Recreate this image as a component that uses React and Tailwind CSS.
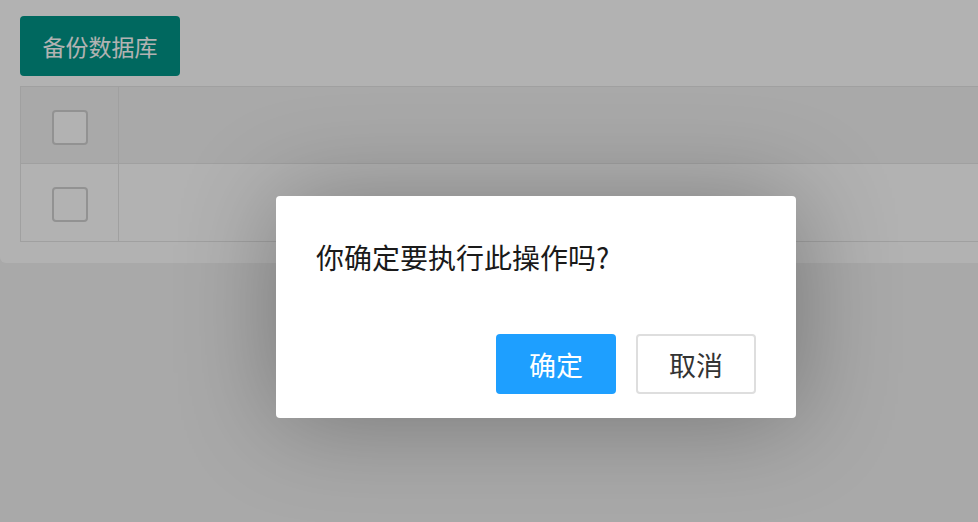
import React from "react";

export default function App() {
  const font = { fontFamily: '"Noto Sans CJK SC", "Noto Sans", sans-serif' };
  return (
    <div className="relative w-[978px] h-[522px] overflow-hidden bg-[#f2f2f2]" style={font}>
      <div className="w-[1020px] bg-white rounded-b-[6px] pt-[16px] pb-[21px] pl-[20px]">
        <div className="w-[160px] h-[60px] bg-[#009688] rounded-[4px] flex items-center justify-center text-white text-[23px] leading-none">
          备份数据库
        </div>
        <div className="mt-[10px] border border-[#e6e6e6] flex flex-col">
          <div className="flex h-[77px] bg-[#f2f2f2] border-b border-[#e6e6e6]">
            <div className="w-[98px] border-r border-[#e6e6e6] flex items-center justify-center">
              <div className="w-[36px] h-[35px] mt-[4px] border-2 border-[#d2d2d2] rounded-[4px] bg-white" />
            </div>
            <div className="flex-1" />
          </div>
          <div className="flex h-[77px] bg-white">
            <div className="w-[98px] border-r border-[#e6e6e6] flex items-center justify-center">
              <div className="w-[36px] h-[35px] mt-[4px] border-2 border-[#d2d2d2] rounded-[4px] bg-white" />
            </div>
            <div className="flex-1" />
          </div>
        </div>
      </div>

      <div className="absolute inset-0 bg-black/30" />

      <div className="absolute left-[276px] top-[196px] w-[520px] h-[222px] bg-white rounded-[4px] shadow-[2px_2px_100px_rgba(0,0,0,0.3)] flex flex-col">
        <div className="px-[40px] pt-[42px] text-[28px] leading-[38px] text-[#1a1a1a]">
          你确定要执行此操作吗?
        </div>
        <div className="flex justify-end gap-[20px] pr-[40px] pt-[58px] pb-[24px]">
          <div className="w-[120px] h-[60px] bg-[#1e9fff] rounded-[4px] flex items-center justify-center text-white text-[27px] leading-none">
            确定
          </div>
          <div className="w-[120px] h-[60px] bg-white border-2 border-[#dedede] rounded-[4px] flex items-center justify-center text-[#333] text-[27px] leading-none">
            取消
          </div>
        </div>
      </div>
    </div>
  );
}
